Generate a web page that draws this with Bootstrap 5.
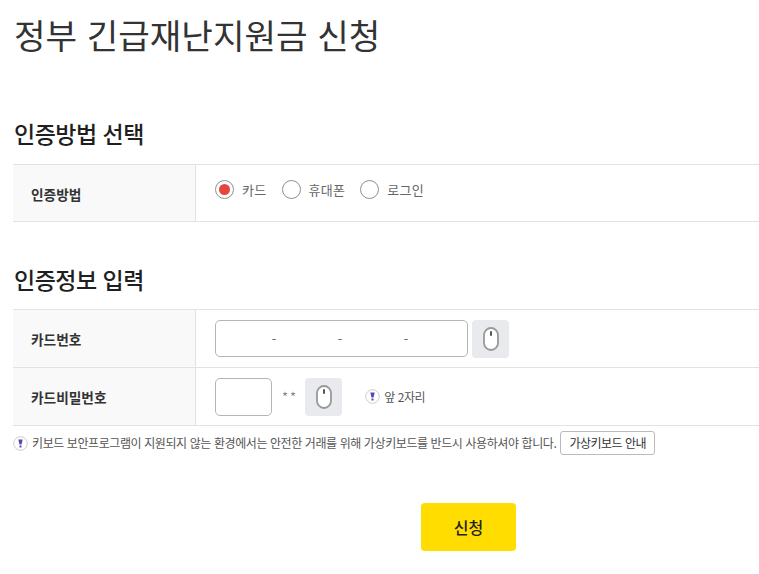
<!DOCTYPE html>
<html lang="ko">
<head>
  <meta charset="UTF-8">
  <title>정부 긴급재난지원금 신청</title>
  <meta name="viewport" content="width=device-width, initial-scale=1">
  <link href="https://cdn.jsdelivr.net/npm/bootstrap@5.3.0/dist/css/bootstrap.min.css" rel="stylesheet">
  <style>
    body {
      font-family: "Noto Sans CJK KR", "Noto Sans", sans-serif;
      color: #333;
      overflow: hidden;
    }
    .page-wrap { padding: 0 0 0 13px; }
    .page-title {
      font-size: 34.3px;
      line-height: 52px;
      font-weight: 400;
      color: #333;
      margin: 8px 0 0 0;
      padding-left: 1px;
    }
    .sec-title {
      font-size: 23px;
      line-height: 34px;
      font-weight: 500;
      color: #1f1f1f;
      letter-spacing: -0.5px;
      padding-left: 1px;
    }
    .sec-first { margin: 56px 0 14px 0; }
    .sec-second { margin: 40px 0 13px 0; }
    .form-rows { border-top: 1px solid #e2e2e2; }
    .form-line { border-bottom: 1px solid #e2e2e2; }
    .line-h { height: 57px; }
    .line-tall { height: 58px; }
    .line-label {
      width: 183px;
      flex: none;
      background: #f9f9f9;
      border-right: 1px solid #e2e2e2;
      padding: 2px 0 0 18px;
      font-size: 13.7px;
      font-weight: 700;
      color: #333;
    }
    .line-body { padding-left: 19px; font-size: 13px; color: #666; }
    .radio-group { padding-bottom: 7px; }
    .radio-item { margin-right: 7px; letter-spacing: 0.3px; }
    .radio-dot {
      width: 19px;
      height: 19px;
      border: 1px solid #8f8f8f;
      border-radius: 50%;
      background: #fff;
      flex: none;
    }
    .radio-on { position: relative; }
    .radio-on::after {
      content: "";
      position: absolute;
      inset: 3px;
      border-radius: 50%;
      background: #e8453c;
    }
    .card-input, .pw-input {
      height: 37px;
      border: 1px solid #b5b5b5;
      border-radius: 5px;
      background: #fff;
    }
    .card-input { width: 253px; padding-left: 25px; color: #666; }
    .card-input span { width: 66px; text-align: center; line-height: 1; }
    .pw-input { width: 57px; height: 38px; }
    .mouse-btn {
      width: 37px;
      height: 38px;
      border-radius: 4px;
      background: #e9eaed;
      flex: none;
    }
    .stars { color: #888; letter-spacing: 2px; font-size: 13px; margin: 0 7px 0 10px; }
    .note-text { font-size: 12px; color: #555; letter-spacing: -0.41px; }
    .note-row { margin-top: 5px; }
    .hint-gap { margin-left: 23px; }
    .kbd-btn {
      font-size: 12px;
      color: #333;
      height: 24px;
      line-height: 1;
      padding: 0 8px;
      border: 1px solid #bbb;
      border-radius: 3px;
      background: #fff;
      letter-spacing: -0.5px;
    }
    .apply-row { margin-top: 48px; padding-left: 408px; }
    .apply-btn {
      width: 95px;
      height: 48px;
      padding: 0;
      border: 0;
      border-radius: 4px;
      background: #ffdd00;
      color: #222;
      font-size: 16px;
      font-weight: 500;
    }
  </style>
</head>
<body>
  <div class="page-wrap">
    <h1 class="page-title">정부 긴급재난지원금 신청</h1>

    <h2 class="sec-title sec-first">인증방법 선택</h2>
    <div class="form-rows">
      <div class="form-line line-h d-flex">
        <div class="line-label d-flex align-items-center">인증방법</div>
        <div class="line-body radio-group d-flex align-items-center gap-2">
          <span class="radio-dot radio-on"></span><span class="radio-item">카드</span>
          <span class="radio-dot"></span><span class="radio-item">휴대폰</span>
          <span class="radio-dot"></span><span class="radio-item">로그인</span>
        </div>
      </div>
    </div>

    <h2 class="sec-title sec-second">인증정보 입력</h2>
    <div class="form-rows">
      <div class="form-line line-tall d-flex">
        <div class="line-label d-flex align-items-center">카드번호</div>
        <div class="line-body d-flex align-items-center gap-1">
          <div class="card-input d-flex align-items-center"><span>-</span><span>-</span><span>-</span></div>
          <div class="mouse-btn d-flex align-items-center justify-content-center">
            <svg width="16" height="24" viewBox="0 0 16 24"><rect x="1" y="1" width="14" height="22" rx="7" fill="#fff" stroke="#999" stroke-width="1.8"/><rect x="7" y="4" width="2" height="5" rx="1" fill="#555"/></svg>
          </div>
        </div>
      </div>
      <div class="form-line line-tall d-flex">
        <div class="line-label d-flex align-items-center">카드비밀번호</div>
        <div class="line-body d-flex align-items-center">
          <div class="pw-input"></div>
          <span class="stars">**</span>
          <div class="mouse-btn d-flex align-items-center justify-content-center">
            <svg width="16" height="24" viewBox="0 0 16 24"><rect x="1" y="1" width="14" height="22" rx="7" fill="#fff" stroke="#999" stroke-width="1.8"/><rect x="7" y="4" width="2" height="5" rx="1" fill="#555"/></svg>
          </div>
          <span class="d-flex align-items-center note-text hint-gap gap-1">
            <svg width="15" height="15" viewBox="0 0 15 15"><circle cx="7.5" cy="7.5" r="6.8" fill="#fff" stroke="#ccc"/><path d="M5.3 3.5h4.4l-1.2 5h-2z" fill="#5b45b5"/><rect x="6.5" y="9.5" width="2" height="2" fill="#5b45b5"/></svg>
            앞 2자리
          </span>
        </div>
      </div>
    </div>

    <div class="d-flex align-items-center gap-1 note-row note-text">
      <svg width="15" height="15" viewBox="0 0 15 15"><circle cx="7.5" cy="7.5" r="6.8" fill="#fff" stroke="#ccc"/><path d="M5.3 3.5h4.4l-1.2 5h-2z" fill="#5b45b5"/><rect x="6.5" y="9.5" width="2" height="2" fill="#5b45b5"/></svg>
      <span>키보드 보안프로그램이 지원되지 않는 환경에서는 안전한 거래를 위해 가상키보드를 반드시 사용하셔야 합니다.</span>
      <button type="button" class="btn kbd-btn">가상키보드 안내</button>
    </div>

    <div class="apply-row">
      <button type="button" class="btn apply-btn">신청</button>
    </div>
  </div>
</body>
</html>
